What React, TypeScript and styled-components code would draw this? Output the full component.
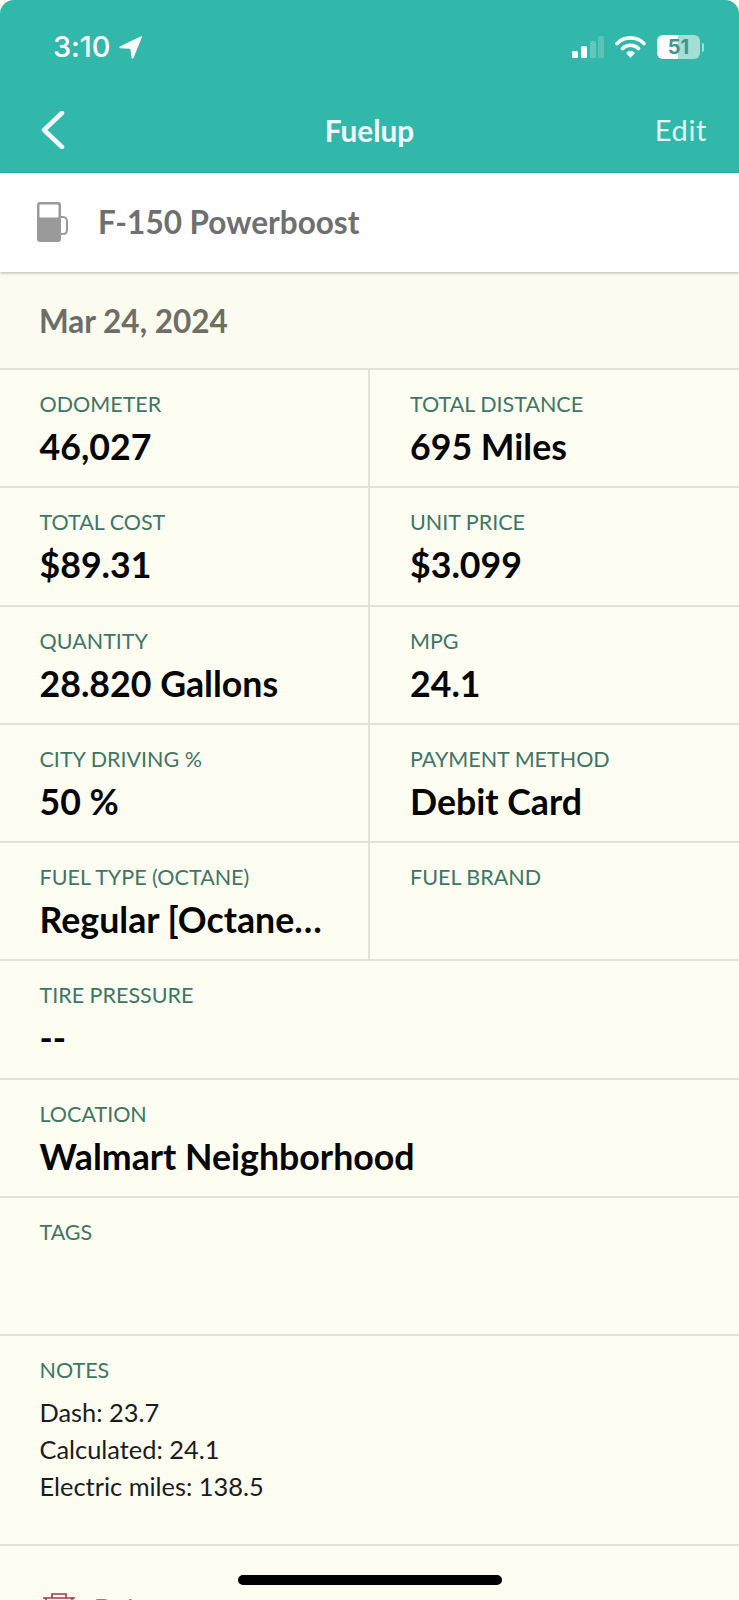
import React from "react";
import styled, { createGlobalStyle } from "styled-components";

const Global = createGlobalStyle`
  html, body { margin: 0; padding: 0; background: #fff; }
  #root { width: 739px; height: 1600px; overflow: hidden; }
`;

const Screen = styled.div`
  position: relative;
  width: 739px;
  height: 1600px;
  overflow: hidden;
  background: #fdfdf2;
  font-family: Lato, "Noto Sans", sans-serif;
`;

const Header = styled.header`
  height: 173px;
  box-sizing: border-box;
  background: #31b8ab;
  border-radius: 14px 14px 0 0;
  color: #fff;
  display: flex;
  flex-direction: column;
`;

const StatusBar = styled.div`
  height: 90px;
  box-sizing: border-box;
  padding: 30px 35px 0 53px;
  display: flex;
  justify-content: space-between;
  align-items: flex-start;
`;

const Clock = styled.div`
  display: flex;
  align-items: center;
  gap: 9px;
  font-family: Inter, "Liberation Sans", sans-serif;
  font-size: 29px;
  font-weight: 500;
  line-height: 34px;
  letter-spacing: -0.1px;
`;

const Indicators = styled.div`
  display: flex;
  align-items: center;
  gap: 11px;
  height: 32px;
  margin-top: 1px;
`;

const Battery = styled.div`
  position: relative;
  width: 43px;
  height: 24px;
  border-radius: 6px;
  overflow: hidden;
  background: linear-gradient(to right, #fff 0 50%, #a4dfd5 50% 100%);
  color: #46938a;
  font-family: Inter, "Liberation Sans", sans-serif;
  font-size: 20px;
  font-weight: 700;
  line-height: 24px;
  text-align: center;
`;

const BatteryTip = styled.div`
  width: 2px;
  height: 9px;
  margin-left: -9px;
  border-radius: 0 2px 2px 0;
  background: #a4dfd5;
`;

const NavBar = styled.nav`
  height: 83px;
  box-sizing: border-box;
  padding: 0 32px 2px;
  display: grid;
  grid-template-columns: 1fr auto 1fr;
  align-items: center;
`;

const BackIcon = styled.svg`
  margin: 0 0 1px 9px;
`;

const NavTitle = styled.div`
  font-size: 29.7px;
  font-weight: 700;
  color: #f2fbf9;
`;

const NavAction = styled.div`
  justify-self: end;
  font-size: 29px;
  font-weight: 400;
  letter-spacing: 0.6px;
  color: #e3f6f2;
  margin-bottom: 2px;
`;

const VehicleBar = styled.div`
  position: relative;
  height: 99px;
  box-sizing: border-box;
  padding: 0 0 2px 37px;
  display: flex;
  align-items: center;
  gap: 30px;
  background: #fff;
  box-shadow: 0 1px 3px rgba(0, 0, 0, 0.28);
`;

const VehicleName = styled.div`
  font-size: 31.5px;
  font-weight: 700;
  color: #6f6f6f;
`;

const DateRow = styled.div`
  height: 98px;
  box-sizing: border-box;
  padding: 2px 0 0 39px;
  display: flex;
  align-items: center;
  font-size: 31.5px;
  font-weight: 700;
  color: #6e6e68;
  background: #fbfbf0;
  border-bottom: 2px solid #e2e2d8;
`;

const Grid = styled.div`
  display: grid;
  grid-template-columns: 370px 369px;
`;

const Cell = styled.div<{ $wide?: boolean; $height?: number; $divider?: boolean }>`
  grid-column: ${(p) => (p.$wide ? "1 / -1" : "auto")};
  height: ${(p) => p.$height ?? 118.3}px;
  box-sizing: border-box;
  padding: 20px 0 0 ${(p) => (p.$divider === false ? 40 : 39.5)}px;
  border-bottom: 2px solid #e2e2d8;
  border-right: ${(p) => (p.$divider ? "2px solid #e2e2d8" : "none")};
  min-width: 0;
`;

const Label = styled.div`
  font-size: 21.5px;
  line-height: 28px;
  font-weight: 400;
  color: #3f7565;
`;

const Value = styled.div`
  margin-top: 7px;
  font-size: 35.7px;
  line-height: 44px;
  font-weight: 700;
  color: #050505;
`;

const Notes = styled.div`
  margin-top: 10px;
  font-size: 25.4px;
  line-height: 37px;
  color: #1c1c1c;
`;

const DeleteRow = styled.div`
  padding: 47px 0 0 43px;
  display: flex;
  align-items: flex-start;
  gap: 19px;
  font-size: 26px;
  line-height: 32px;
  color: #8a8478;
`;

const HomeBar = styled.div`
  position: absolute;
  left: 238px;
  top: 1575px;
  width: 264px;
  height: 10px;
  border-radius: 5px;
  background: #000;
`;

type Item = { label: string; value?: string };

const pairs: Item[] = [
  { label: "ODOMETER", value: "46,027" },
  { label: "TOTAL DISTANCE", value: "695 Miles" },
  { label: "TOTAL COST", value: "$89.31" },
  { label: "UNIT PRICE", value: "$3.099" },
  { label: "QUANTITY", value: "28.820 Gallons" },
  { label: "MPG", value: "24.1" },
  { label: "CITY DRIVING %", value: "50 %" },
  { label: "PAYMENT METHOD", value: "Debit Card" },
  { label: "FUEL TYPE (OCTANE)", value: "Regular [Octane…" },
  { label: "FUEL BRAND" },
];

export default function App() {
  return (
    <Screen>
      <Global />
      <Header>
        <StatusBar>
          <Clock>
            3:10
            <svg width="23" height="23" viewBox="0 0 23 23">
              <path d="M22 0.3 Q23.3 0 22.8 1.5 L14.5 22 Q13.3 23.6 12.6 22 L11.5 13.8 Q11.4 12.9 10.5 12.8 L1 12.3 Q-0.4 11.4 0.8 10.4 Z" fill="#fff" />
            </svg>
          </Clock>
          <Indicators>
            <svg width="32" height="24" viewBox="0 0 32 24">
              <rect x="0" y="16" width="6" height="7" rx="1.5" fill="#fff" />
              <rect x="9" y="11" width="6" height="12" rx="1.5" fill="#fff" />
              <rect x="18" y="6" width="6" height="17" rx="1.5" fill="#62c8bb" />
              <rect x="26" y="1" width="6" height="22" rx="1.5" fill="#58c3b6" />
            </svg>
            <svg width="31" height="24" viewBox="0 0 31 24">
              <path d="M2 8.5 A19 19 0 0 1 29 8.5" fill="none" stroke="#fff" strokeWidth="3.6" strokeLinecap="round" />
              <path d="M7.5 13.5 A11.5 11.5 0 0 1 23.5 13.5" fill="none" stroke="#fff" strokeWidth="3.6" strokeLinecap="round" />
              <path d="M11 18 Q15.5 13.5 20 18 L15.5 23 Z" fill="#fff" />
            </svg>
            <Battery>51</Battery>
            <BatteryTip />
          </Indicators>
        </StatusBar>
        <NavBar>
          <BackIcon width="24" height="38" viewBox="0 0 24 38">
            <path d="M21 2 L3 19 L21 36" fill="none" stroke="#f2fbf9" strokeWidth="4.5" strokeLinecap="round" strokeLinejoin="round" />
          </BackIcon>
          <NavTitle>Fuelup</NavTitle>
          <NavAction>Edit</NavAction>
        </NavBar>
      </Header>
      <VehicleBar>
        <svg width="31" height="40" viewBox="0 0 31 40">
          <path d="M3 0 H21 Q24 0 24 3 V37 Q24 40 21 40 H3 Q0 40 0 37 V3 Q0 0 3 0 Z" fill="#9a9a9a" />
          <rect x="2.5" y="2.5" width="19" height="13" rx="1" fill="#fff" />
          <path d="M24 15 H26 Q30 15 30 20 V28 Q30 32 26 32 H24" fill="none" stroke="#9a9a9a" strokeWidth="2" />
        </svg>
        <VehicleName>F-150 Powerboost</VehicleName>
      </VehicleBar>
      <DateRow>Mar 24, 2024</DateRow>
      <Grid>
        {pairs.map((item, i) => (
          <Cell key={item.label} $divider={i % 2 === 0}>
            <Label>{item.label}</Label>
            {item.value && <Value>{item.value}</Value>}
          </Cell>
        ))}
        <Cell $wide>
          <Label>TIRE PRESSURE</Label>
          <Value>--</Value>
        </Cell>
        <Cell $wide>
          <Label>LOCATION</Label>
          <Value>Walmart Neighborhood</Value>
        </Cell>
        <Cell $wide $height={137.5}>
          <Label>TAGS</Label>
        </Cell>
        <Cell $wide $height={210}>
          <Label>NOTES</Label>
          <Notes>
            Dash: 23.7
            <br />
            Calculated: 24.1
            <br />
            Electric miles: 138.5
          </Notes>
        </Cell>
      </Grid>
      <DeleteRow>
        <svg width="32" height="40" viewBox="0 0 32 40">
          <path d="M0 5 H32 M9 5 V1 H23 V5 M3 5 V38 H29 V5" fill="none" stroke="#a5344a" strokeWidth="1.6" />
        </svg>
        Delete
      </DeleteRow>
      <HomeBar />
    </Screen>
  );
}
